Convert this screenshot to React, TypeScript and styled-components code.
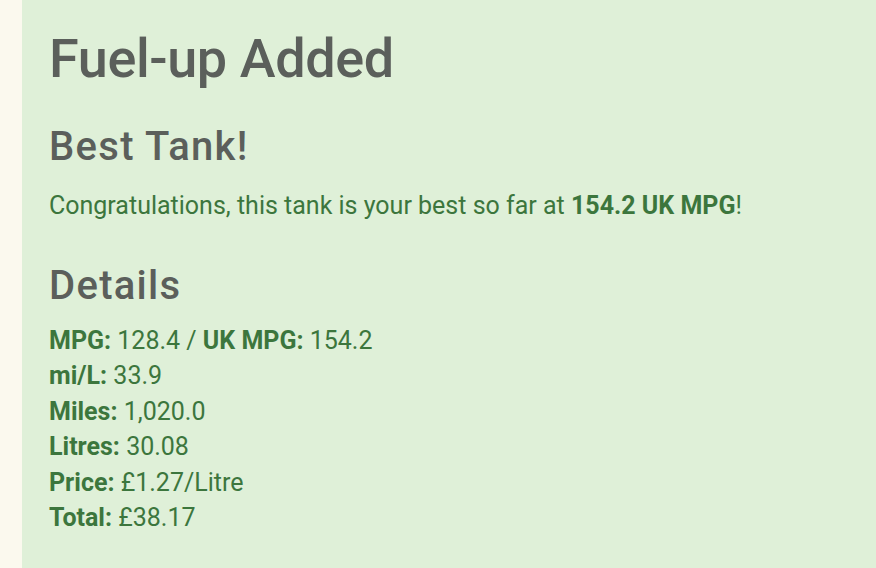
import React from 'react';
import styled, { createGlobalStyle } from 'styled-components';

const details = [
  { label: 'MPG:', value: '128.4', extra: { label: 'UK MPG:', value: '154.2' } },
  { label: 'mi/L:', value: '33.9' },
  { label: 'Miles:', value: '1,020.0' },
  { label: 'Litres:', value: '30.08' },
  { label: 'Price:', value: '£1.27/Litre' },
  { label: 'Total:', value: '£38.17' },
];

const GlobalStyle = createGlobalStyle`
  html, body {
    margin: 0;
    padding: 0;
    height: 100%;
    background: #fbf9ee;
  }
  #root {
    height: 100%;
  }
`;

const Page = styled.div`
  display: flex;
  height: 100vh;
  padding-left: 22px;
  overflow: hidden;
  font-family: Roboto, 'Noto Sans', sans-serif;
`;

const Panel = styled.div`
  flex: 1;
  background: #dff0d8;
  padding: 29px 27px 0;
  color: #3c763d;
`;

const Title = styled.h1`
  margin: 0 0 37px;
  font-size: 54px;
  line-height: 59px;
  font-weight: 500;
  letter-spacing: -0.4px;
  color: #5b5f5b;
`;

const SubTitle = styled.h2<{ gapAfter: number }>`
  margin: 0 0 ${p => p.gapAfter}px;
  font-size: 40px;
  line-height: 44px;
  font-weight: 500;
  letter-spacing: 1.3px;
  color: #5b5f5b;
`;

const Message = styled.p`
  margin: 0 0 40px;
  font-size: 25px;
  line-height: 35.5px;
`;

const DetailLine = styled.div`
  font-size: 25px;
  line-height: 35.5px;
`;

const Label = styled.strong`
  font-weight: 700;
`;

export default function App() {
  return (
    <>
      <GlobalStyle />
      <Page>
        <Panel>
          <Title>Fuel-up Added</Title>
          <SubTitle gapAfter={19}>Best Tank!</SubTitle>
          <Message>
            Congratulations, this tank is your best so far at <Label>154.2 UK MPG</Label>!
          </Message>
          <SubTitle gapAfter={15}>Details</SubTitle>
          {details.map(d => (
            <DetailLine key={d.label}>
              <Label>{d.label}</Label> {d.value}
              {d.extra && (
                <>
                  {' / '}
                  <Label>{d.extra.label}</Label> {d.extra.value}
                </>
              )}
            </DetailLine>
          ))}
        </Panel>
      </Page>
    </>
  );
}
